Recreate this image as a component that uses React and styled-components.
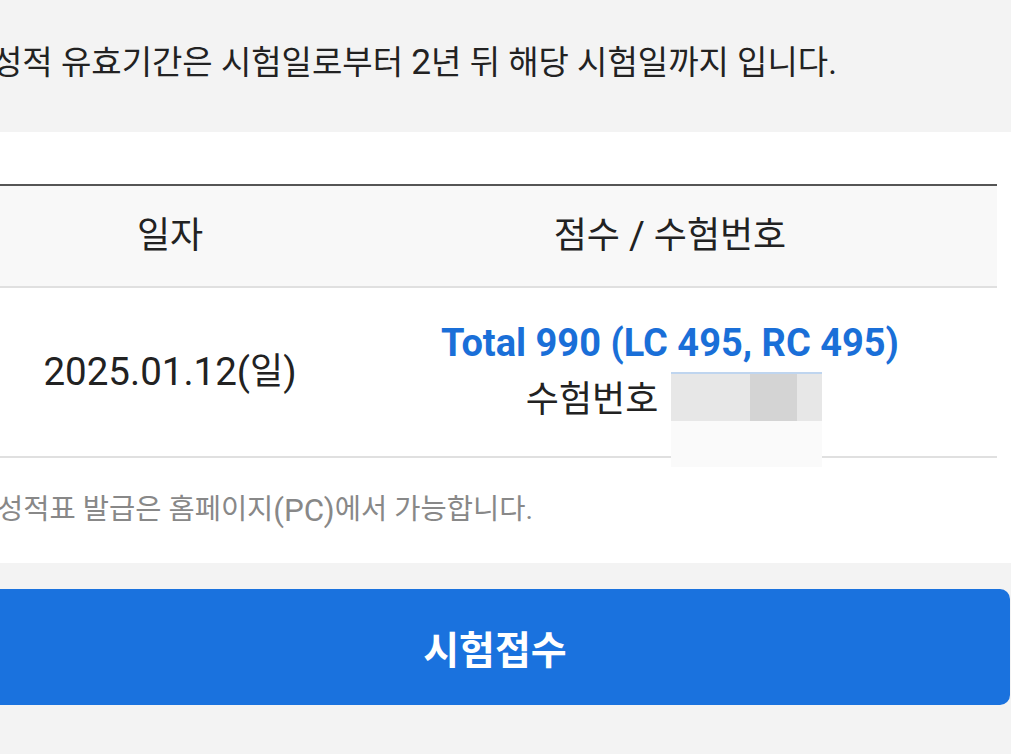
import styled, { createGlobalStyle } from "styled-components";

const GlobalStyle = createGlobalStyle`
  body {
    margin: 0;
    background: #f3f3f3;
    font-family: Roboto, "Noto Sans CJK KR", sans-serif;
    color: #222;
    overflow-x: hidden;
  }
`;

export default function App() {
  return (
    <>
      <GlobalStyle />
      <Notice>
        <NoticeText>
          성적 유효기간은 시험일로부터 <Lat>2</Lat>년 뒤 해당 시험일까지 입니다.
        </NoticeText>
      </Notice>
      <Panel>
        <Table>
          <HeadRow>
            <HeadCell>일자</HeadCell>
            <HeadCell>
              점수 <Lat>/</Lat> 수험번호
            </HeadCell>
          </HeadRow>
          <BodyRow>
            <Cell>
              <Lat>2025.01.12(</Lat>일<Lat>)</Lat>
            </Cell>
            <Cell>
              <ScoreBox>
                <Score>Total 990 (LC 495, RC 495)</Score>
                <ExamNo>
                  수험번호 <Mask><MaskDark /></Mask>
                </ExamNo>
              </ScoreBox>
            </Cell>
          </BodyRow>
        </Table>
        <Note>
          성적표 발급은 홈페이지<Lat $size={1.1}>(PC)</Lat>에서 가능합니다.
        </Note>
      </Panel>
      <Actions>
        <ApplyButton>시험접수</ApplyButton>
      </Actions>
    </>
  );
}

const Lat = styled.span`
  font-size: ${({ $size = 1.07 }) => $size}em;
  line-height: 1;
`;

const Notice = styled.div`
  height: 132px;
  display: flex;
  align-items: center;
`;

const NoticeText = styled.p`
  margin: -7px 0 0 -8px;
  font-size: 33px;
  line-height: 1;
  white-space: nowrap;
  color: #222;
`;

const Panel = styled.section`
  background: #fff;
  padding-top: 52px;
`;

const Table = styled.div`
  margin-left: -3px;
  width: 1000px;
`;

const HeadRow = styled.div`
  display: grid;
  grid-template-columns: 346px 1fr;
  height: 100px;
  background: #f8f8f8;
  border-top: 2px solid #555;
  border-bottom: 2px solid #e0e0e0;
`;

const BodyRow = styled.div`
  display: grid;
  grid-template-columns: 346px 1fr;
  height: 168px;
  border-bottom: 2px solid #e0e0e0;
`;

const HeadCell = styled.div`
  display: flex;
  align-items: center;
  justify-content: center;
  font-size: 36px;
  line-height: 1;
  white-space: pre;
`;

const Cell = styled.div`
  display: flex;
  align-items: center;
  justify-content: center;
  font-size: 36px;
  line-height: 1;
`;

const ScoreBox = styled.div`
  display: flex;
  flex-direction: column;
  align-items: center;
`;

const Score = styled.div`
  font-size: 38px;
  font-weight: 700;
  line-height: 57px;
  color: #1a6fd8;
`;

const ExamNo = styled.div`
  padding-left: 8px;
  font-size: 36px;
  line-height: 57px;
  white-space: pre;
`;

const Mask = styled.span`
  position: relative;
  display: inline-block;
  vertical-align: top;
  margin-left: 4px;
  width: 151px;
  height: 47px;
  background: #e7e7e7;
  border-top: 2px solid #bfd5ef;

  &::after {
    content: "";
    position: absolute;
    top: 100%;
    left: 0;
    right: 0;
    height: 46px;
    background: #fafafa;
  }
`;

const MaskDark = styled.span`
  position: absolute;
  top: 0;
  bottom: 0;
  left: 79px;
  width: 47px;
  background: #d4d4d4;
`;

const Note = styled.p`
  margin: 0 0 0 -3px;
  height: 105px;
  display: flex;
  align-items: center;
  font-size: 28.5px;
  line-height: 1;
  white-space: nowrap;
  color: #888;
`;

const Actions = styled.div`
  padding: 26px 0 49px;
`;

const ApplyButton = styled.button`
  display: flex;
  align-items: center;
  justify-content: center;
  margin-left: -20px;
  width: 1030px;
  height: 116px;
  border: 0;
  border-radius: 10px;
  background: #1a72de;
  color: #fff;
  font-family: inherit;
  font-size: 39px;
  font-weight: 700;
  cursor: pointer;
`;
